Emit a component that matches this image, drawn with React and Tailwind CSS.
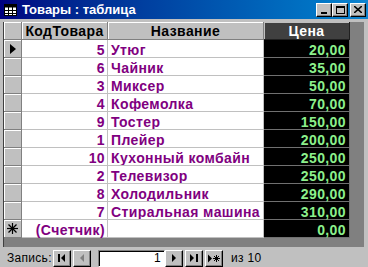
import React from "react";

const rows = [
  [5, "Утюг", "20,00"],
  [6, "Чайник", "35,00"],
  [3, "Миксер", "50,00"],
  [4, "Кофемолка", "70,00"],
  [9, "Тостер", "150,00"],
  [1, "Плейер", "200,00"],
  [10, "Кухонный комбайн", "250,00"],
  [2, "Телевизор", "250,00"],
  [8, "Холодильник", "290,00"],
  [7, "Стиральная машина", "310,00"],
];

const font = { fontFamily: '"Liberation Sans", Arial, sans-serif' };

function TitleButton({ children }) {
  return (
    <div className="w-[16px] h-[14px] bg-[#c0c0c0] border border-t-white border-l-white border-r-black border-b-black shadow-[inset_-1px_-1px_0_#808080] flex items-center justify-center">
      {children}
    </div>
  );
}

function NavButton({ children }) {
  return (
    <div className="w-[18px] h-[17px] bg-[#c0c0c0] border border-t-white border-l-white border-r-black border-b-black shadow-[inset_-1px_-1px_0_#808080] flex items-center justify-center">
      {children}
    </div>
  );
}

function Row({ sel, code, name, price }) {
  return (
    <div className="grid grid-cols-[18px_86px_156px_86px] h-[18px] tracking-[0.4px]">
      <div className="bg-[#c0c0c0] border-r border-b border-[#808080] shadow-[inset_1px_1px_0_#fff] flex items-center justify-center">
        {sel === "cur" && (
          <svg width="6" height="10" viewBox="0 0 6 10">
            <path d="M0 0 L6 5 L0 10 Z" fill="#000" />
          </svg>
        )}
        {sel === "new" && (
          <svg width="11" height="11" viewBox="0 0 11 11" stroke="#000" strokeWidth="1.2">
            <line x1="5.5" y1="0" x2="5.5" y2="11" />
            <line x1="0" y1="5.5" x2="11" y2="5.5" />
            <line x1="1.5" y1="1.5" x2="9.5" y2="9.5" />
            <line x1="9.5" y1="1.5" x2="1.5" y2="9.5" />
          </svg>
        )}
      </div>
      <div className="bg-white border-r border-b border-[#c0c0c0] text-right pr-[2px] pt-[3px] leading-[14px] text-[14px] font-bold text-[#800080] whitespace-nowrap">
        {code}
      </div>
      <div className="bg-white border-r border-b border-[#c0c0c0] pl-[3px] pt-[3px] leading-[14px] text-[14px] font-bold text-[#800080] whitespace-nowrap overflow-hidden">
        {name}
      </div>
      <div className="bg-black border-r border-b border-[#707070] text-right pr-[3px] pt-[3px] leading-[14px] text-[14px] font-bold text-[#8cf08c] whitespace-nowrap">
        {price}
      </div>
    </div>
  );
}

export default function App() {
  return (
    <div className="w-[368px] h-[267px] bg-[#c0c0c0] flex flex-col overflow-hidden" style={font}>
      <div className="h-[19px] bg-gradient-to-r from-[#000080] to-[#1084d0] flex items-center pl-[4px] pr-[2px]">
        <svg width="13" height="12" viewBox="0 0 13 12" className="mr-[5px]">
          <rect x="0.5" y="0.5" width="12" height="11" fill="#fff" stroke="#000" />
          <rect x="0.5" y="0.5" width="12" height="3" fill="#000" />
          <line x1="4.5" y1="0" x2="4.5" y2="12" stroke="#000" />
          <line x1="8.5" y1="0" x2="8.5" y2="12" stroke="#000" />
          <line x1="0" y1="6.5" x2="13" y2="6.5" stroke="#000" />
          <line x1="0" y1="9.5" x2="13" y2="9.5" stroke="#000" />
        </svg>
        <span className="text-white font-bold text-[13px] leading-[19px] whitespace-nowrap">Товары : таблица</span>
        <div className="ml-auto flex items-center">
          <TitleButton>
            <div className="w-[6px] h-[2px] bg-black mt-[6px] mr-[1px]" />
          </TitleButton>
          <TitleButton>
            <div className="w-[9px] h-[8px] border border-black border-t-2" />
          </TitleButton>
          <div className="w-[2px]" />
          <TitleButton>
            <svg width="8" height="7" viewBox="0 0 8 7">
              <path d="M0 0 L8 7 M8 0 L0 7" stroke="#000" strokeWidth="1.6" />
            </svg>
          </TitleButton>
        </div>
      </div>
      <div className="flex-1 flex flex-col pt-[3px] pl-[3px] pr-[4px]">
        <div className="h-[225px] bg-[#808080] border-l border-[#404040] flex flex-col">
          <div className="grid grid-cols-[18px_86px_156px_86px] h-[18px] tracking-[0.4px]">
            <div className="bg-[#c0c0c0] border-r border-b border-[#808080] shadow-[inset_1px_1px_0_#fff]" />
            <div className="bg-[#c0c0c0] border-r border-b border-[#808080] shadow-[inset_1px_1px_0_#fff] text-center pt-[2px] leading-[15px] text-[14px] font-bold text-black whitespace-nowrap">
              КодТовара
            </div>
            <div className="bg-[#c0c0c0] border-r border-b border-[#808080] shadow-[inset_1px_1px_0_#fff] text-center pt-[2px] leading-[15px] text-[14px] font-bold text-black whitespace-nowrap">
              Название
            </div>
            <div className="bg-[#404040] border-r border-b border-[#202020] shadow-[inset_1px_1px_0_#c0c0c0] text-center pt-[2px] leading-[15px] text-[14px] font-bold text-white whitespace-nowrap">
              Цена
            </div>
          </div>
          {rows.map((r, i) => (
            <Row key={i} sel={i === 0 ? "cur" : ""} code={r[0]} name={r[1]} price={r[2]} />
          ))}
          <Row sel="new" code="(Счетчик)" name="" price="0,00" />
        </div>
        <div className="flex-1 flex items-center pt-[2px] text-[12px] text-black tracking-[0.3px]">
          <span className="ml-[4px] w-[46px] leading-[14px]">Запись:</span>
          <NavButton>
            <svg width="8" height="8" viewBox="0 0 8 8">
              <rect x="0" y="0" width="2" height="8" fill="#000" />
              <path d="M7 0 L3 4 L7 8 Z" fill="#000" />
            </svg>
          </NavButton>
          <div className="w-[2px]" />
          <NavButton>
            <svg width="5" height="8" viewBox="0 0 5 8">
              <path d="M4 0 L0 4 L4 8 Z" fill="#808080" />
            </svg>
          </NavButton>
          <div className="w-[67px] h-[17px] ml-[7px] bg-white border border-t-[#808080] border-l-[#808080] border-r-white border-b-white shadow-[inset_1px_1px_0_#000] text-right pr-[3px] leading-[15px]">
            1
          </div>
          <NavButton>
            <svg width="5" height="8" viewBox="0 0 5 8">
              <path d="M0 0 L4 4 L0 8 Z" fill="#000" />
            </svg>
          </NavButton>
          <div className="w-[2px]" />
          <NavButton>
            <svg width="8" height="8" viewBox="0 0 8 8">
              <path d="M0 0 L4 4 L0 8 Z" fill="#000" />
              <rect x="6" y="0" width="2" height="8" fill="#000" />
            </svg>
          </NavButton>
          <div className="w-[2px]" />
          <NavButton>
            <svg width="12" height="9" viewBox="0 0 12 9">
              <path d="M0 0.5 L4 4.5 L0 8.5 Z" fill="#000" />
              <g stroke="#000" strokeWidth="1">
                <line x1="8.5" y1="1" x2="8.5" y2="8" />
                <line x1="5" y1="4.5" x2="12" y2="4.5" />
                <line x1="6" y1="2" x2="11" y2="7" />
                <line x1="11" y1="2" x2="6" y2="7" />
              </g>
            </svg>
          </NavButton>
          <span className="ml-[8px] leading-[14px]">из 10</span>
        </div>
      </div>
    </div>
  );
}
